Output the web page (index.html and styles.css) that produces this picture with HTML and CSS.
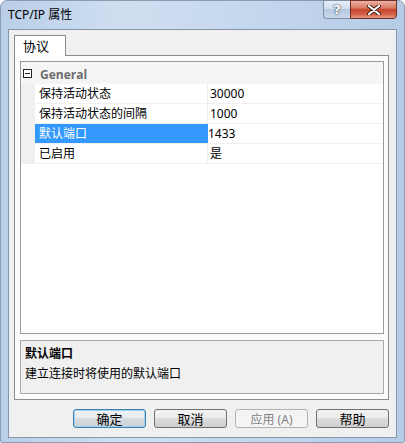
FILE: index.html
```html
<!DOCTYPE html>
<html lang="zh-CN">
<head>
<meta charset="utf-8">
<title>TCP/IP 属性</title>
<link rel="stylesheet" href="styles.css">
</head>
<body>
<div class="window">
  <div class="titlebar">
    <span class="title">TCP/IP 属性</span>
    <div class="caption-btns">
      <div class="cb help">?</div>
      <div class="cb close">
        <svg width="14" height="10" viewBox="0 0 14 10"><path d="M2 1 L12 9 M12 1 L2 9" stroke="#3a1a14" stroke-width="4" stroke-linecap="round"/><path d="M2 1 L12 9 M12 1 L2 9" stroke="#ffffff" stroke-width="2.2" stroke-linecap="round"/></svg>
      </div>
    </div>
  </div>
  <div class="client">
    <div class="tabs"><div class="tab">协议</div></div>
    <div class="panel">
      <div class="grid">
        <div class="cat">
          <svg class="toggle" width="9" height="9" viewBox="0 0 9 9"><rect x="0.5" y="0.5" width="8" height="8" fill="#fff" stroke="#222"/><path d="M2 4.5 H7" stroke="#222"/></svg>
          <span class="cat-name">General</span>
        </div>
        <div class="row"><span class="gutter"></span><span class="name">保持活动状态</span><span class="val">30000</span></div>
        <div class="row"><span class="gutter"></span><span class="name">保持活动状态的间隔</span><span class="val">1000</span></div>
        <div class="row selected"><span class="gutter"></span><span class="name">默认端口</span><span class="val">1433</span></div>
        <div class="row"><span class="gutter"></span><span class="name">已启用</span><span class="val">是</span></div>
      </div>
      <div class="desc">
        <div class="desc-title">默认端口</div>
        <div class="desc-text">建立连接时将使用的默认端口</div>
      </div>
    </div>
    <div class="buttons">
      <div class="btn default">确定</div>
      <div class="btn">取消</div>
      <div class="btn disabled">应用 (A)</div>
      <div class="btn">帮助</div>
    </div>
  </div>
</div>
</body>
</html>
```
FILE: styles.css
```css
html, body {
  margin: 0;
  padding: 0;
  background: #ffffff;
}
body {
  font-family: "Noto Sans", "Noto Sans CJK SC", sans-serif;
  font-size: 12px;
  color: #000;
}
.window {
  width: 405px;
  height: 443px;
  box-sizing: border-box;
  border: 1px solid #8a9bb2;
  border-radius: 7px 7px 2px 2px;
  padding: 0 7px 4px 7px;
  background: linear-gradient(to right, #b9cee8 0%, #cfdff1 30%, #c6d8ee 60%, #b5cbe6 100%);
  display: flex;
  flex-direction: column;
}
.titlebar {
  height: 28px;
  display: flex;
  align-items: flex-start;
  flex: none;
}
.title {
  margin-top: 6px;
  line-height: 16px;
  font-size: 12px;
  font-family: "Noto Sans", "Noto Sans CJK SC", sans-serif;
}
.caption-btns {
  margin-left: auto;
  display: flex;
  margin-top: -1px;
}
.cb {
  height: 19px;
  box-sizing: border-box;
  display: flex;
  align-items: center;
  justify-content: center;
}
.help {
  width: 27px;
  border: 1px solid #7d8ea6;
  border-right: none;
  border-radius: 0 0 0 4px;
  background: linear-gradient(to bottom, #e6eef8 0%, #d0ddec 45%, #b6c9e0 50%, #c9d8ea 100%);
  color: #fff;
  font-family: "DejaVu Sans", sans-serif;
  font-weight: bold;
  font-size: 13px;
  text-shadow: 0 0 2px #33445a, 0 0 1px #33445a;
}
.close {
  width: 47px;
  border: 1px solid #6f2f28;
  border-radius: 0 0 4px 0;
  background: linear-gradient(to bottom, #ebb2a4 0%, #d97a63 40%, #c7432a 52%, #d4654c 80%, #e79a84 100%);
}
.client {
  flex: 1;
  background: #f0f0f0;
  border: 1px solid #8796aa;
  padding: 5px 7px 0 5px;
  display: flex;
  flex-direction: column;
}
.tabs {
  display: flex;
  height: 20px;
  flex: none;
}
.tab {
  width: 52px;
  height: 21px;
  box-sizing: border-box;
  border: 1px solid #898c95;
  border-bottom: none;
  background: #ffffff;
  padding-left: 8px;
  line-height: 20px;
  font-size: 13px;
  position: relative;
  z-index: 1;
}
.panel {
  height: 345px;
  box-sizing: border-box;
  border: 1px solid #898c95;
  background: #fbfbfb;
  padding: 5px 4px 5px 5px;
  display: flex;
  flex-direction: column;
  gap: 6px;
}
.grid {
  height: 273px;
  box-sizing: border-box;
  border: 1px solid #9b9b9b;
  background: #ffffff;
}
.cat {
  height: 22px;
  display: flex;
  align-items: center;
  background: #f5f5f5;
  box-sizing: border-box;
  padding-top: 2px;
}
.toggle {
  margin-left: 2px;
  margin-top: -1px;
  display: block;
}
.cat-name {
  margin-left: 8px;
  font-weight: bold;
  color: #6d6d6d;
  font-family: "Open Sans", "Noto Sans", sans-serif;
  font-size: 12px;
}
.row {
  height: 20px;
  display: grid;
  grid-template-columns: 14px 173px 1fr;
  box-sizing: border-box;
  border-bottom: 1px solid #f0f0f0;
  line-height: 19px;
}
.gutter {
  background: #f0f0f0;
}
.name {
  padding-left: 4px;
  border-right: 1px solid #f0f0f0;
  white-space: nowrap;
}
.val {
  padding-left: 2px;
}
.row.selected .name {
  background: #3399ff;
  color: #ffffff;
  border-right-color: #3399ff;
}
.row.selected .val {
  padding-left: 0;
}
.desc {
  height: 54px;
  box-sizing: border-box;
  border: 1px solid #a9a9a9;
  background: #f0f0f0;
  padding: 5px 4px 3px;
}
.desc-title {
  font-weight: bold;
  line-height: 16px;
}
.desc-text {
  margin-top: 4px;
  line-height: 16px;
}
.buttons {
  margin-top: 9px;
  display: flex;
  justify-content: flex-end;
  gap: 8px;
}
.btn {
  width: 73px;
  height: 19px;
  box-sizing: border-box;
  border: 1px solid #707070;
  border-radius: 3px;
  background: linear-gradient(to bottom, #f2f2f2 0%, #ebebeb 49%, #dddddd 50%, #cfcfcf 100%);
  display: flex;
  align-items: center;
  justify-content: center;
  font-size: 13px;
}
.btn.default {
  border-color: #3c7fb1;
  box-shadow: inset 0 0 0 1px #9fd3ef;
  background: linear-gradient(to bottom, #f0f3f5 0%, #e6eaed 49%, #d7dcdf 50%, #cbd1d5 100%);
}
.btn.disabled {
  border-color: #adb2b5;
  background: #f4f4f4;
  color: #838383;
  font-size: 12px;
}
```
